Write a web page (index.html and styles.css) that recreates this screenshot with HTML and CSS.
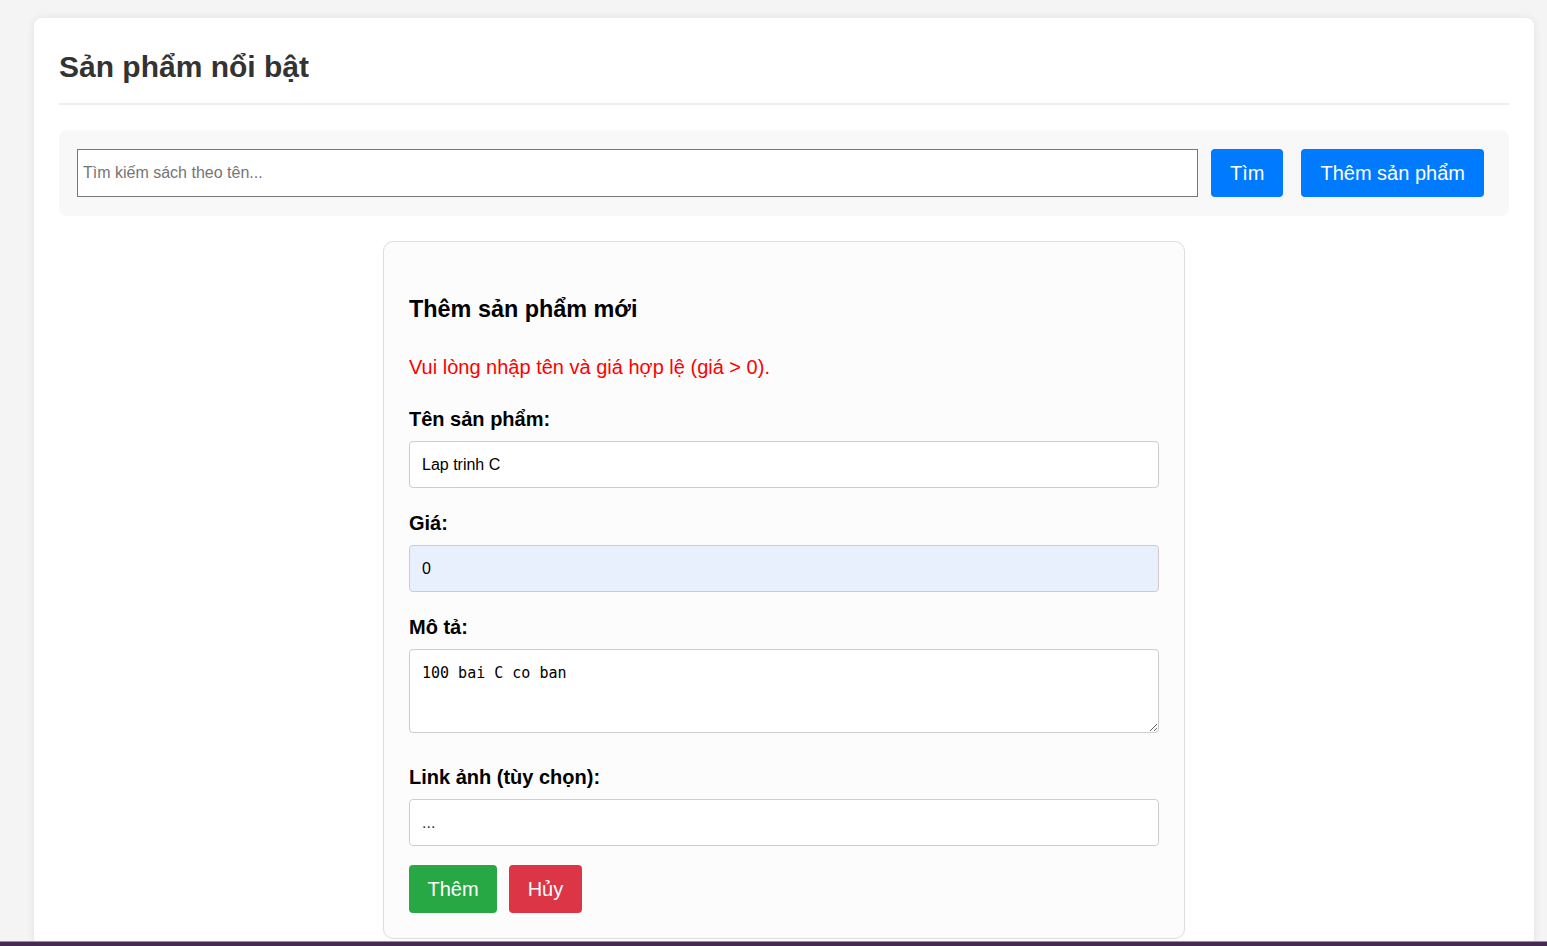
FILE: index.html
```html
<!DOCTYPE html>
<html lang="vi">
<head>
<meta charset="utf-8">
<title>Sản phẩm nổi bật</title>
<link rel="stylesheet" href="styles.css">
</head>
<body>
<div class="container">
  <h2 class="page-title">Sản phẩm nổi bật</h2>
  <div class="search-bar">
    <input class="search-input" type="text" placeholder="Tìm kiếm sách theo tên...">
    <button class="btn btn-blue btn-search">Tìm</button>
    <button class="btn btn-blue">Thêm sản phẩm</button>
  </div>
  <div class="form-card">
    <h3 class="form-title">Thêm sản phẩm mới</h3>
    <p class="error">Vui lòng nhập tên và giá hợp lệ (giá &gt; 0).</p>
    <div class="group">
      <label class="label">Tên sản phẩm:</label>
      <input class="field" type="text" value="Lap trinh C">
    </div>
    <div class="group">
      <label class="label">Giá:</label>
      <input class="field field-auto" type="text" value="0">
    </div>
    <div class="group group-ta">
      <label class="label">Mô tả:</label>
      <textarea class="field area">100 bai C co ban</textarea>
    </div>
    <div class="group group-last">
      <label class="label">Link ảnh (tùy chọn):</label>
      <input class="field" type="text" placeholder="...">
    </div>
    <div class="actions">
      <button class="btn btn-green">Thêm</button>
      <button class="btn btn-red">Hủy</button>
    </div>
  </div>
</div>
<div class="footer-bar"></div>
</body>
</html>
```
FILE: styles.css
```css
* { box-sizing: border-box; }
html, body { margin: 0; padding: 0; }
body {
  background: #f4f4f4;
  font-family: "Liberation Sans", Arial, sans-serif;
  color: #000;
  height: 946px;
  overflow: hidden;
}
.container {
  width: 1500px;
  margin: 18px 0 0 34px;
  background: #fff;
  border-radius: 8px;
  box-shadow: 0 0 8px rgba(0,0,0,0.08);
  padding: 30px 25px 40px 25px;
  min-height: 1000px;
}
.page-title {
  margin: 0;
  font-size: 30px;
  line-height: 38px;
  font-weight: bold;
  color: #333;
  padding-bottom: 17px;
  border-bottom: 2px solid #eee;
}
.search-bar {
  margin-top: 25px;
  background: #f8f8f8;
  border-radius: 8px;
  padding: 19px 25px 19px 18px;
  display: flex;
  align-items: center;
}
.search-input {
  width: 1121px;
  height: 48px;
  border: 1px solid #767676;
  border-radius: 0;
  padding: 0 5px;
  font-family: "Liberation Sans", Arial, sans-serif;
  font-size: 16px;
  color: #000;
  background: #fff;
}
.search-input::placeholder { color: #757575; }
.btn {
  height: 48px;
  border: none;
  border-radius: 4px;
  color: #fff;
  font-family: "Liberation Sans", Arial, sans-serif;
  font-size: 20px;
  padding: 0 18.5px;
  cursor: pointer;
}
.btn-blue { background: #007bff; margin-left: 18px; padding: 0 19px; }
.btn-search { margin-left: 13px; }
.btn-green { background: #28a745; }
.btn-red { background: #dc3545; margin-left: 12px; }
.form-card {
  width: 802px;
  margin: 25px auto 0;
  background: #fcfcfc;
  border: 1px solid #ddd;
  border-radius: 10px;
  padding: 25px 25px 25px 25px;
}
.form-title {
  margin: 29px 0 0;
  font-size: 23.4px;
  line-height: 26px;
  font-weight: bold;
}
.error {
  margin: 33px 0 0;
  color: #f00;
  font-size: 20px;
  line-height: 24px;
}
.group { margin-top: 28px; }
.group + .group { margin-top: 23px; }
.group-last { margin-top: 32px !important; }
.label {
  display: block;
  font-size: 20px;
  line-height: 24px;
  font-weight: bold;
  margin-bottom: 10px;
}
.field {
  display: block;
  width: 100%;
  height: 47px;
  border: 1px solid #ccc;
  border-radius: 4px;
  background: #fff;
  padding: 0 12px;
  font-family: "Liberation Sans", Arial, sans-serif;
  font-size: 16px;
  color: #000;
}
.field::placeholder { color: #333; }
.field-auto { background: #e8f0fe; }
.area {
  height: 84px;
  padding: 13px 12px 12px;
  font-family: "DejaVu Sans Mono", "Liberation Mono", monospace;
  font-size: 15px;
  line-height: 20px;
  resize: vertical;
}
.actions {
  margin-top: 19px;
  display: flex;
}
.footer-bar {
  position: fixed;
  left: 0;
  right: 0;
  bottom: 0;
  height: 5px;
  background: #472a52;
  border-top: 1px solid #9a8fa0;
}
```
